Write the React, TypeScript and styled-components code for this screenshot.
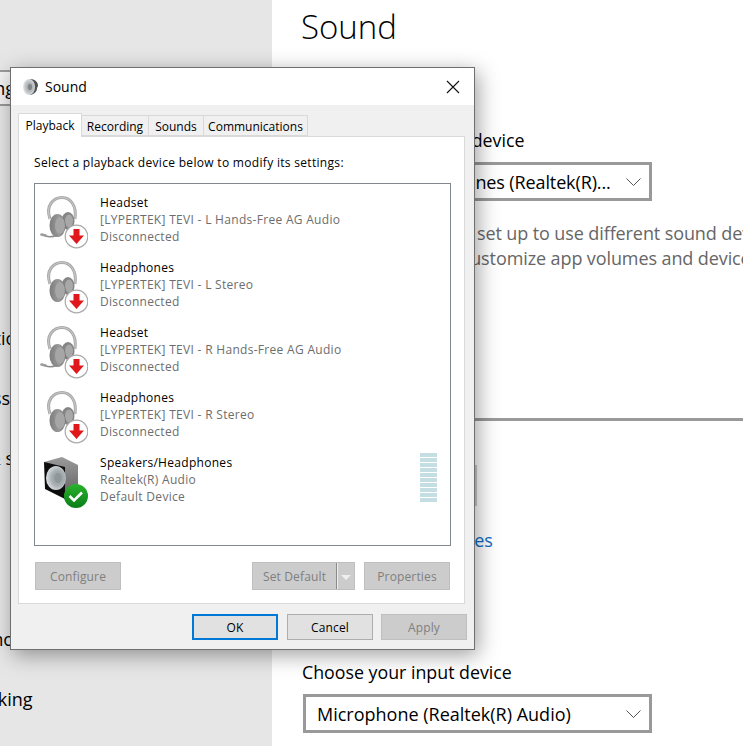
import React from "react";
import styled, { createGlobalStyle } from "styled-components";

const GlobalStyle = createGlobalStyle`
  html, body {
    margin: 0;
    padding: 0;
    background: #fff;
  }
  * {
    box-sizing: border-box;
  }
`;

const UI_FONT = `"Open Sans", "Noto Sans", "Liberation Sans", sans-serif`;

const Page = styled.div`
  position: relative;
  display: grid;
  grid-template-columns: 272px 1fr;
  width: 743px;
  height: 746px;
  overflow: hidden;
  font-family: ${UI_FONT};
  color: #000;
`;

const Sidebar = styled.aside`
  background: #e6e6e6;
  overflow: hidden;
  padding-top: 70px;
`;

const SearchBox = styled.div`
  display: flex;
  align-items: center;
  width: 240px;
  height: 36px;
  margin-left: -120px;
  padding-left: 21px;
  border: 2px solid #999;
  background: #f2f2f2;
  font-size: 18px;
`;

const NavList = styled.nav`
  display: flex;
  flex-direction: column;
  margin: 202px 0 0 -70px;
`;

const NavItem = styled.div`
  height: 60.17px;
  line-height: 60px;
  font-size: 18px;
  white-space: nowrap;
`;

const Main = styled.main`
  display: flex;
  flex-direction: column;
  align-items: flex-start;
  min-width: 0;
  padding-left: 30px;
`;

const PageTitle = styled.h1`
  margin: 0 0 0 -1px;
  font-size: 33px;
  font-weight: 300;
  line-height: 54px;
`;

const SectionLabel = styled.div<{ $top: number }>`
  margin-top: ${(p) => p.$top}px;
  font-size: 17.8px;
  line-height: 24px;
  white-space: nowrap;
`;

const Select = styled.div`
  display: flex;
  align-items: center;
  justify-content: space-between;
  width: 349px;
  height: 39px;
  margin: 10px 0 0 1px;
  padding: 0 8px 0 11px;
  border: 3px solid #999;
  background: #fff;
  font-size: 18px;
  white-space: nowrap;
`;

const SelectValue = styled.span<{ $tight?: boolean }>`
  letter-spacing: ${(p) => (p.$tight ? "-0.12px" : "normal")};
`;

const Hint = styled.p`
  margin: 20px 0 0;
  font-size: 18px;
  line-height: 25px;
  letter-spacing: -0.1px;
  color: #666;
  white-space: nowrap;
`;

const Track = styled.div`
  flex: none;
  width: 100%;
  height: 3px;
  margin-top: 147px;
  background: #999;
`;

const Troubleshoot = styled.div`
  display: flex;
  align-items: center;
  justify-content: center;
  width: 175px;
  height: 41px;
  margin-top: 44px;
  background: #ccc;
  font-size: 18px;
`;

const Link = styled.a`
  margin-top: 22px;
  font-size: 18px;
  line-height: 24px;
  color: #0a6cc4;
  white-space: nowrap;
`;

const Dialog = styled.section`
  position: absolute;
  left: 10px;
  top: 67px;
  display: flex;
  flex-direction: column;
  width: 465px;
  height: 583px;
  border: 1px solid #6f6f6f;
  background: #f0f0f0;
  box-shadow: 3px 5px 20px rgba(0, 0, 0, 0.38);
  font-size: 12px;
`;

const TitleBar = styled.header`
  display: flex;
  align-items: center;
  gap: 6px;
  flex: none;
  height: 37px;
  padding: 0 14px 0 11px;
  background: #fff;
  font-size: 14px;
`;

const TitleText = styled.span`
  flex: 1;
`;

const Tabs = styled.div`
  display: flex;
  align-items: flex-end;
  flex: none;
  height: 31px;
  margin-left: 7px;
`;

const Tab = styled.div<{ $active?: boolean; $width: number }>`
  display: flex;
  align-items: center;
  justify-content: center;
  width: ${(p) => p.$width}px;
  height: ${(p) => (p.$active ? 24 : 21)}px;
  margin-bottom: ${(p) => (p.$active ? -1 : 0)}px;
  padding-top: ${(p) => (p.$active ? 0 : 2)}px;
  border: 1px solid #d9d9d9;
  border-left-width: ${(p) => (p.$active ? 1 : 0)}px;
  border-bottom-width: ${(p) => (p.$active ? 0 : 1)}px;
  background: ${(p) => (p.$active ? "#fff" : "#f0f0f0")};
  position: relative;
  z-index: ${(p) => (p.$active ? 1 : 0)};
`;

const Panel = styled.div`
  display: flex;
  flex-direction: column;
  flex: none;
  width: 447px;
  height: 468px;
  margin-left: 7px;
  padding: 0 14px 0 15px;
  border: 1px solid #d9d9d9;
  background: #fff;
`;

const Instruction = styled.div`
  margin-top: 17px;
  line-height: 18px;
  letter-spacing: 0.31px;
`;

const DeviceList = styled.div`
  display: flex;
  flex-direction: column;
  flex: none;
  width: 417px;
  height: 363px;
  margin-top: 11px;
  padding: 6px 13px 0 5px;
  border: 1px solid #828790;
`;

const DeviceRow = styled.div`
  display: flex;
  flex: none;
  gap: 12px;
  height: 65px;
`;

const IconSlot = styled.div`
  flex: none;
  width: 48px;
  height: 60px;
  padding-top: 5px;
`;

const DeviceText = styled.div`
  flex: 1;
  padding-top: 4px;
  line-height: 17px;
  letter-spacing: 0.3px;
  white-space: nowrap;
`;

const DeviceName = styled.div`
  color: #000;
`;

const DeviceInfo = styled.div`
  color: #6d6d6d;
`;

const Meter = styled.div`
  display: flex;
  flex-direction: column;
  gap: 1px;
  flex: none;
  width: 17px;
  padding-top: 3px;
`;

const MeterBar = styled.div`
  height: 4px;
  background: #c4dee4;
`;

const ActionRow = styled.div`
  display: flex;
  align-items: center;
  margin-top: 16px;
  padding-left: 1px;
`;

const Spacer = styled.div`
  flex: 1;
`;

const Button = styled.div<{ $kind?: "default" | "normal" | "disabled"; $height?: number }>`
  display: flex;
  align-items: center;
  justify-content: center;
  flex: none;
  width: 86px;
  height: ${(p) => p.$height ?? 28}px;
  border: ${(p) => (p.$kind === "default" ? "2px solid #0078d7" : p.$kind === "normal" ? "1px solid #adadad" : "1px solid #bfbfbf")};
  background: ${(p) => (p.$kind === "default" || p.$kind === "normal" ? "#e1e1e1" : "#ccc")};
  color: ${(p) => (p.$kind === "default" || p.$kind === "normal" ? "#000" : "#7f7f7f")};
  letter-spacing: 0.15px;
`;

const OkButton = styled(Button)`
  margin-right: 1px;
`;

const SplitButton = styled.div`
  display: flex;
  flex: none;
  width: 103px;
  height: 28px;
  margin-right: 9px;
  border: 1px solid #bfbfbf;
  background: #ccc;
  color: #7f7f7f;
  letter-spacing: 0.15px;
`;

const SplitLabel = styled.div`
  display: flex;
  align-items: center;
  justify-content: center;
  width: 84px;
  border-right: 1px solid #8a8a8a;
`;

const SplitArrow = styled.div`
  display: flex;
  align-items: center;
  justify-content: center;
  flex: 1;
  box-shadow: inset 1px 0 0 #eee;
`;

const ArrowGlyph = styled.div`
  width: 0;
  height: 0;
  margin-top: 2px;
  border-left: 5px solid transparent;
  border-right: 5px solid transparent;
  border-top: 5px solid #efefef;
`;

const Footer = styled.footer`
  display: flex;
  justify-content: flex-end;
  gap: 8px;
  margin-top: 10px;
  padding-right: 7px;
`;

const Chevron = () => (
  <svg width="15" height="8" viewBox="0 0 15 8" fill="none" stroke="#555" strokeWidth="1">
    <path d="M.5.5l7 7 7-7" />
  </svg>
);

const CloseIcon = () => (
  <svg width="14" height="14" viewBox="0 0 14 14" fill="none" stroke="#111" strokeWidth="1.1">
    <path d="M1 1l12 12M13 1L1 13" />
  </svg>
);

const WindowIcon = () => (
  <svg width="17" height="18" viewBox="0 0 17 18">
    <defs>
      <radialGradient id="winCone" cx="0.55" cy="0.5" r="0.6">
        <stop offset="0" stopColor="#8d9296" />
        <stop offset="0.5" stopColor="#b9bdc0" />
        <stop offset="1" stopColor="#eceeef" />
      </radialGradient>
    </defs>
    <path d="M8 1c5 0 8 3 8 6.500 0 1-1 2-1 3 0 3-3 6-7 6.500z" fill="#4d5154" />
    <ellipse cx="7" cy="9" rx="6" ry="8" fill="url(#winCone)" />
    <ellipse cx="8" cy="9" rx="2" ry="3" fill="#7f8488" />
  </svg>
);

const DownBadge = () => (
  <g>
    <circle cx="36.500" cy="41.500" r="11.300" fill="#fff" stroke="#a9a9a9" strokeWidth="1.200" />
    <path d="M33.500 34h6v6.500h4.500l-7.500 8.500-7.500-8.500h4.500z" fill="#e0181c" />
  </g>
);

const HeadphoneIcon = ({ mic }: { mic?: boolean }) => (
  <svg width="48" height="54" viewBox="0 0 48 54">
    <defs>
      <linearGradient id="cupFill" x1="0" y1="0" x2="1" y2="0">
        <stop offset="0" stopColor="#7d7d7d" />
        <stop offset="0.6" stopColor="#9a9a9a" />
        <stop offset="1" stopColor="#6f6f6f" />
      </linearGradient>
    </defs>
    <path d="M10 24C5 10 14 2.500 22 2.500s15 7.500 13 21.500" fill="none" stroke="#a8a8a8" strokeWidth="3" />
    <path d="M10 24C5 10 14 2.500 22 2.500s15 7.500 13 21.500" fill="none" stroke="#d2d2d2" strokeWidth="0.800" />
    <ellipse cx="28" cy="26" rx="6.500" ry="9" fill="#858585" />
    <ellipse cx="29" cy="26" rx="4" ry="6.500" fill="#a8a8a8" />
    <ellipse cx="17.500" cy="30.500" rx="8" ry="11.500" fill="url(#cupFill)" />
    <ellipse cx="20" cy="30.500" rx="5" ry="8.500" fill="#a6a6a6" />
    {mic && (
      <>
        <path d="M5 40.500c3 1.500 8 1.500 12-.5" fill="none" stroke="#8a8a8a" strokeWidth="1.600" strokeLinecap="round" />
        <path d="M1.500 39.500l4 1" fill="none" stroke="#9c9c9c" strokeWidth="2.600" strokeLinecap="round" />
      </>
    )}
    <DownBadge />
  </svg>
);

const SpeakerIcon = () => (
  <svg width="48" height="54" viewBox="0 0 48 54">
    <defs>
      <linearGradient id="cabSide" x1="0" y1="0" x2="0" y2="1">
        <stop offset="0" stopColor="#9a9a9a" />
        <stop offset="1" stopColor="#5e5e5e" />
      </linearGradient>
      <radialGradient id="cone" cx="0.6" cy="0.5" r="0.6">
        <stop offset="0" stopColor="#8b9397" />
        <stop offset="0.55" stopColor="#a9b0b4" />
        <stop offset="1" stopColor="#dfe3e5" />
      </radialGradient>
      <linearGradient id="greenBadge" x1="0" y1="0" x2="0" y2="1">
        <stop offset="0" stopColor="#2bb32b" />
        <stop offset="1" stopColor="#0a7d1a" />
      </linearGradient>
    </defs>
    <path d="M4 7l18-5 16 8v28L25 45z" fill="url(#cabSide)" />
    <path d="M4 7l21 5v32L5 34z" fill="#0d0d0d" />
    <ellipse cx="16" cy="23" rx="10" ry="12" fill="url(#cone)" />
    <ellipse cx="18" cy="23" rx="3.500" ry="5" fill="#8f979b" />
    <circle cx="36" cy="41" r="12" fill="url(#greenBadge)" />
    <path d="M29.500 41l4.500 4.500 8-8" fill="none" stroke="#fff" strokeWidth="2.600" />
  </svg>
);

const devices = [
  { name: "Headset", info: "[LYPERTEK] TEVI - L Hands-Free AG Audio", mic: true },
  { name: "Headphones", info: "[LYPERTEK] TEVI - L Stereo", mic: false },
  { name: "Headset", info: "[LYPERTEK] TEVI - R Hands-Free AG Audio", mic: true },
  { name: "Headphones", info: "[LYPERTEK] TEVI - R Stereo", mic: false },
];

const navItems = [
  "Notifications & actions",
  "Focus assist",
  "Power & sleep",
  "Battery",
  "Storage",
  "Tablet mode",
  "Multitasking",
];

const meterBars = Array.from({ length: 10 }, (_, i) => i);

const App = () => {
  return (
    <Page>
      <GlobalStyle />
      <Sidebar>
        <SearchBox>Find a setting</SearchBox>
        <NavList>
          {navItems.map((item) => (
            <NavItem key={item}>{item}</NavItem>
          ))}
        </NavList>
      </Sidebar>

      <Main>
        <PageTitle>Sound</PageTitle>
        <SectionLabel $top={74}>Choose your output device</SectionLabel>
        <Select>
          <SelectValue $tight>Speakers/Headphones (Realtek(R)...</SelectValue>
          <Chevron />
        </Select>
        <Hint>
          Certain apps may be set up to use different sound devices
          <br />
          one selected here. Customize app volumes and devices
        </Hint>
        <Track />
        <Troubleshoot>Troubleshoot</Troubleshoot>
        <Link>Manage sound devices</Link>
        <SectionLabel $top={108}>Choose your input device</SectionLabel>
        <Select>
          <SelectValue>Microphone (Realtek(R) Audio)</SelectValue>
          <Chevron />
        </Select>
      </Main>

      <Dialog>
        <TitleBar>
          <WindowIcon />
          <TitleText>Sound</TitleText>
          <CloseIcon />
        </TitleBar>
        <Tabs>
          <Tab $active $width={64}>Playback</Tab>
          <Tab $width={67}>Recording</Tab>
          <Tab $width={55}>Sounds</Tab>
          <Tab $width={104}>Communications</Tab>
        </Tabs>
        <Panel>
          <Instruction>Select a playback device below to modify its settings:</Instruction>
          <DeviceList>
            {devices.map((device) => (
              <DeviceRow key={device.info}>
                <IconSlot>
                  <HeadphoneIcon mic={device.mic} />
                </IconSlot>
                <DeviceText>
                  <DeviceName>{device.name}</DeviceName>
                  <DeviceInfo>{device.info}</DeviceInfo>
                  <DeviceInfo>Disconnected</DeviceInfo>
                </DeviceText>
              </DeviceRow>
            ))}
            <DeviceRow>
              <IconSlot>
                <SpeakerIcon />
              </IconSlot>
              <DeviceText>
                <DeviceName>Speakers/Headphones</DeviceName>
                <DeviceInfo>Realtek(R) Audio</DeviceInfo>
                <DeviceInfo>Default Device</DeviceInfo>
              </DeviceText>
              <Meter>
                {meterBars.map((bar) => (
                  <MeterBar key={bar} />
                ))}
              </Meter>
            </DeviceRow>
          </DeviceList>
          <ActionRow>
            <Button>Configure</Button>
            <Spacer />
            <SplitButton>
              <SplitLabel>Set Default</SplitLabel>
              <SplitArrow>
                <ArrowGlyph />
              </SplitArrow>
            </SplitButton>
            <Button>Properties</Button>
          </ActionRow>
        </Panel>
        <Footer>
          <OkButton $kind="default" $height={26}>OK</OkButton>
          <Button $kind="normal" $height={26}>Cancel</Button>
          <Button $height={26}>Apply</Button>
        </Footer>
      </Dialog>
    </Page>
  );
};

export default App;
